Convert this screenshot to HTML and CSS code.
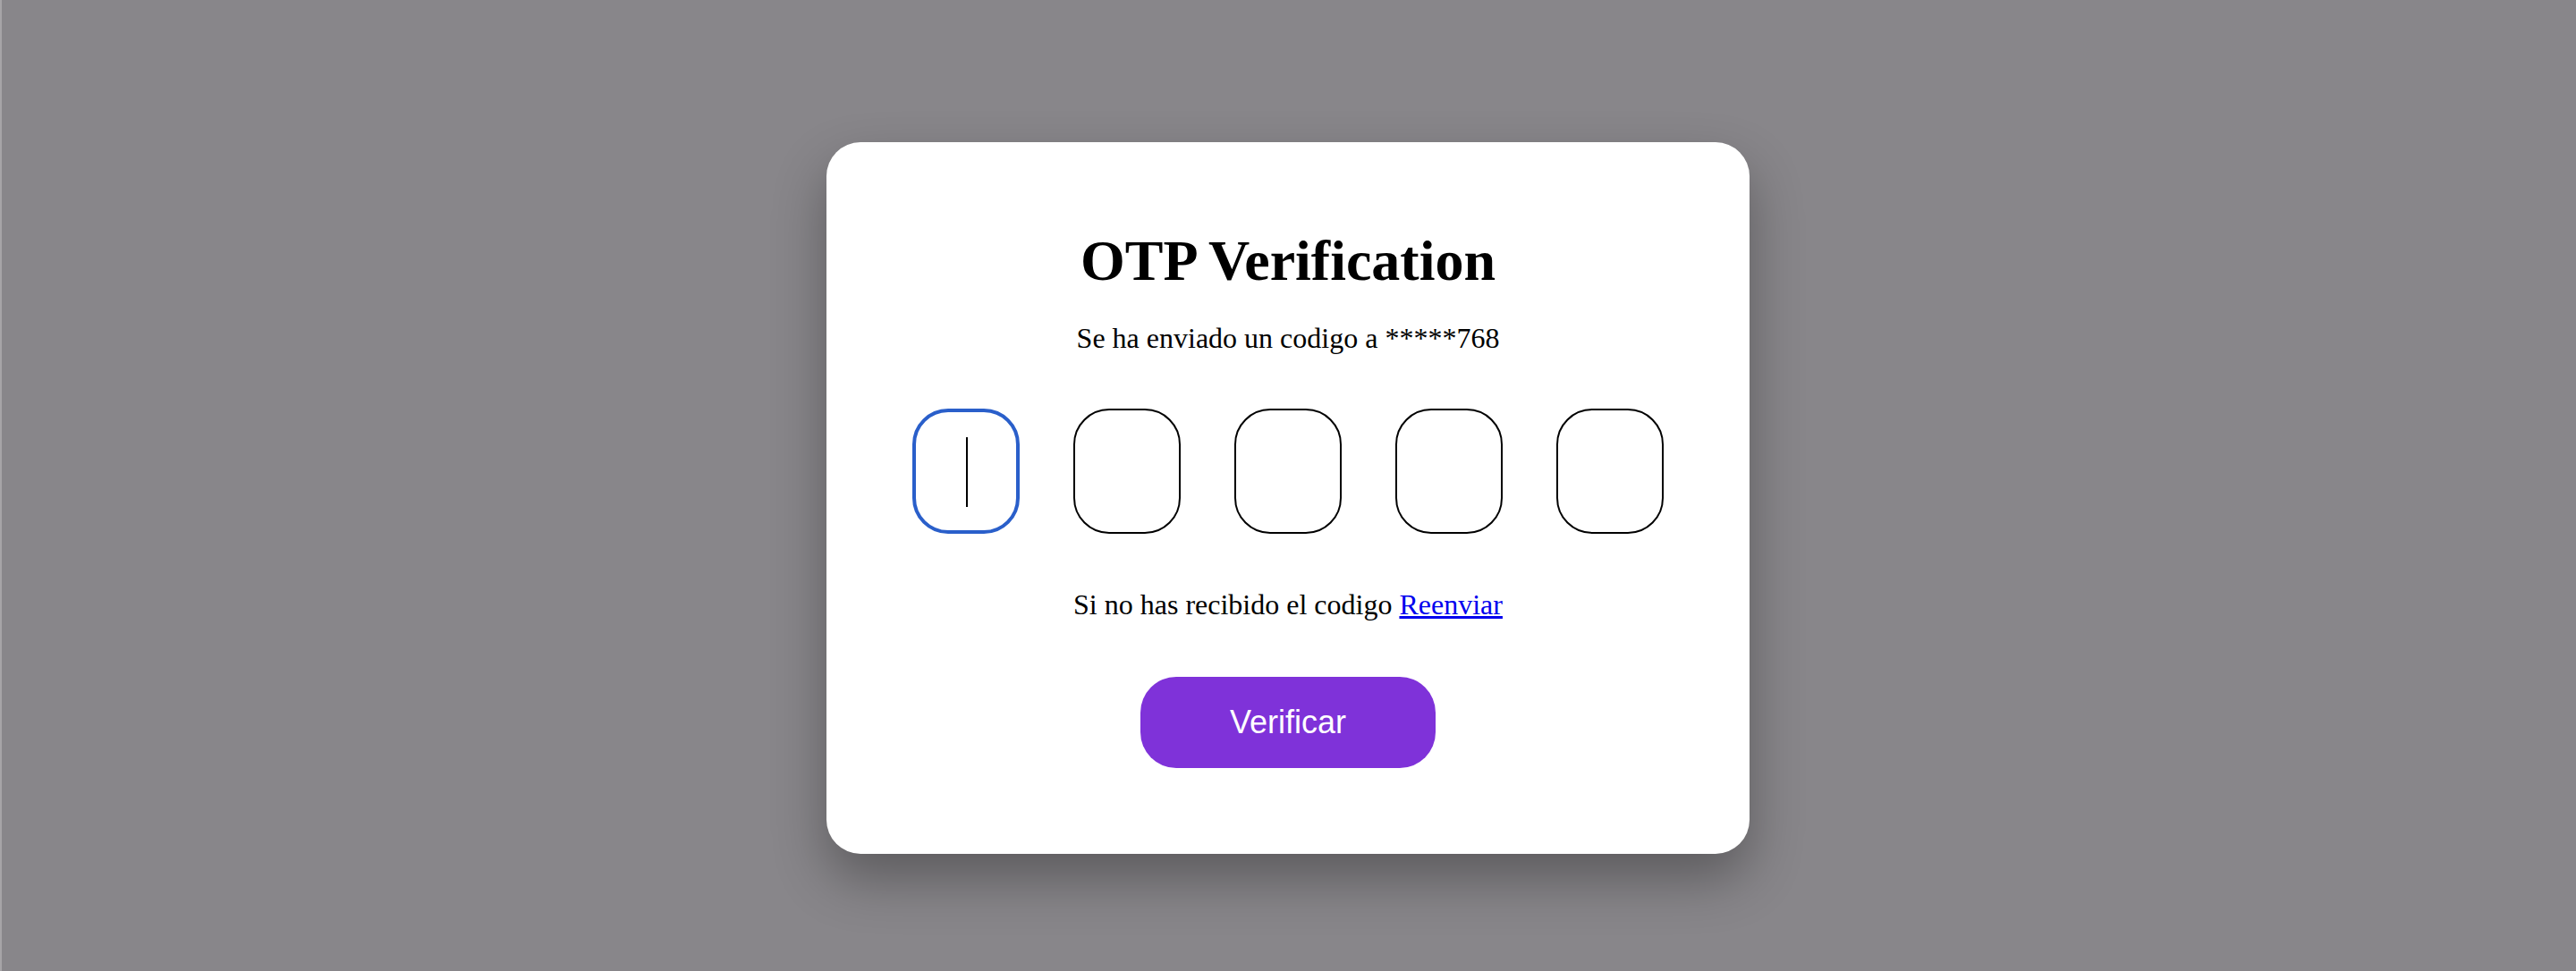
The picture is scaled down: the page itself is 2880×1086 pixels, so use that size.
FILE: index.html
```html
<!DOCTYPE html>
<html lang="es">
<head>
<meta charset="utf-8">
<title>OTP Verification</title>
<link rel="stylesheet" href="styles.css">
</head>
<body>
<main class="card">
  <h1 class="title">OTP Verification</h1>
  <p class="subtitle">Se ha enviado un codigo a *****768</p>
  <div class="otp">
    <label class="slot">
      <input class="digit active" type="text" maxlength="1">
      <span class="caret"></span>
    </label>
    <label class="slot"><input class="digit" type="text" maxlength="1"></label>
    <label class="slot"><input class="digit" type="text" maxlength="1"></label>
    <label class="slot"><input class="digit" type="text" maxlength="1"></label>
    <label class="slot"><input class="digit" type="text" maxlength="1"></label>
  </div>
  <p class="resend">Si no has recibido el codigo <a href="#">Reenviar</a></p>
  <button class="verify" type="button">Verificar</button>
</main>
</body>
</html>
```
FILE: styles.css
```css
html, body {
  margin: 0;
  padding: 0;
}
body {
  min-height: 100vh;
  box-sizing: border-box;
  background: #88868a;
  box-shadow: inset 2px 0 0 #a6a4a7;
  padding-top: 159px;
  font-family: "Liberation Serif", "Times New Roman", serif;
  color: #000;
}
.card {
  width: 1032px;
  height: 796px;
  box-sizing: border-box;
  margin: 0 auto;
  background: #fff;
  border-radius: 38px;
  box-shadow: 0 28px 60px rgba(0, 0, 0, 0.32);
  padding-top: 101px;
  display: flex;
  flex-direction: column;
  align-items: center;
}
.title {
  margin: 0;
  font-size: 64px;
  line-height: 64px;
  font-weight: bold;
}
.subtitle {
  margin: 38px 0 0;
  font-size: 32px;
  line-height: 32px;
}
.otp {
  margin-top: 63px;
  display: flex;
  gap: 60px;
}
.slot {
  position: relative;
  display: block;
  width: 120px;
  height: 140px;
}
.digit {
  display: block;
  width: 120px;
  height: 140px;
  box-sizing: border-box;
  border: 2px solid #000;
  border-radius: 40px;
  background: #fff;
  font-family: "Liberation Serif", "Times New Roman", serif;
  font-size: 64px;
  text-align: center;
  padding: 0;
  margin: 0;
  outline: none;
  caret-color: #000;
}
.digit.active {
  border: 4px solid #2a5fca;
}
.caret {
  position: absolute;
  left: 60px;
  top: 32px;
  width: 2px;
  height: 78px;
  background: #000;
  pointer-events: none;
}
.resend {
  margin: 63px 0 0;
  font-size: 32px;
  line-height: 32px;
}
.resend a {
  color: #0000ee;
  text-decoration: underline;
}
.verify {
  margin-top: 65px;
  width: 330px;
  height: 102px;
  border: none;
  border-radius: 40px;
  background: #7f32d9;
  color: #fff;
  font-family: "Liberation Sans", Arial, sans-serif;
  font-size: 36px;
  line-height: 36px;
  padding: 0;
}
```
